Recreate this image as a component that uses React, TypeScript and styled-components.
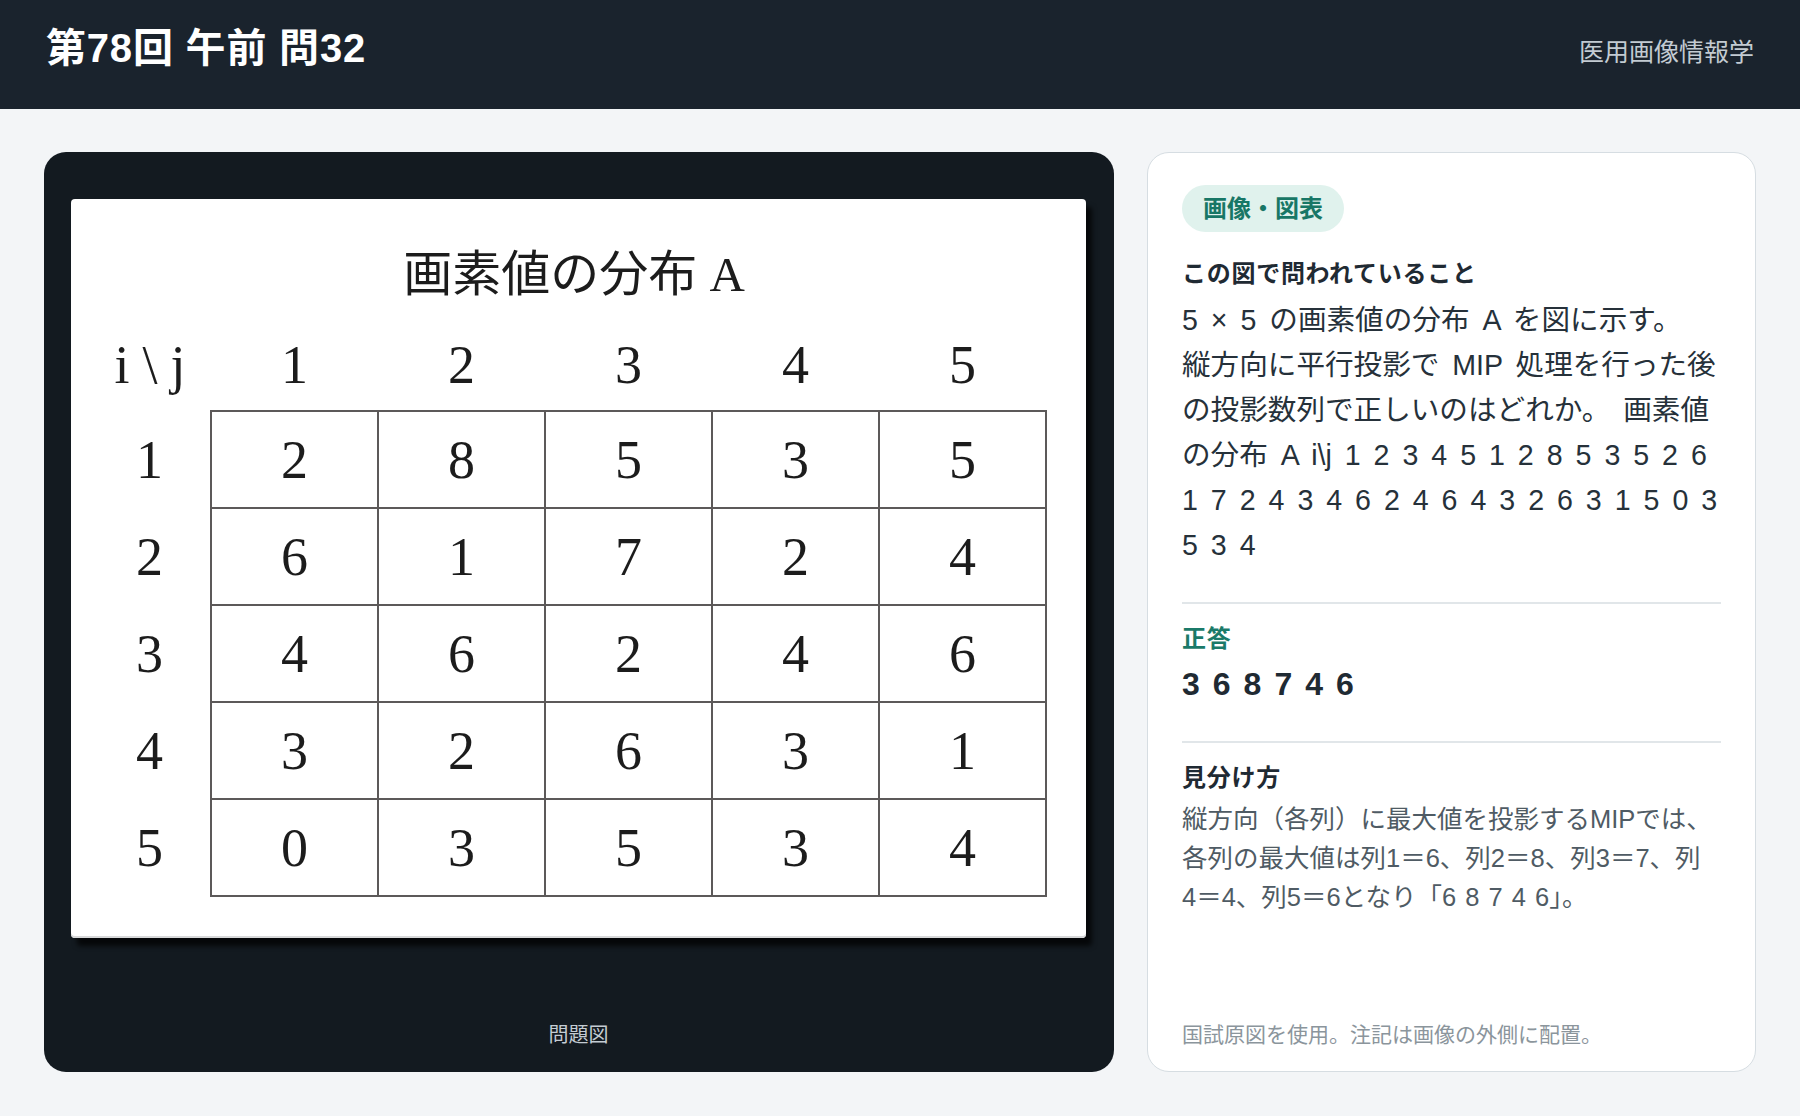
import React from "react";
import styled, { createGlobalStyle } from "styled-components";

const GlobalStyle = createGlobalStyle`
  * { box-sizing: border-box; }
  html, body { margin: 0; padding: 0; }
  body {
    background: #f3f5f7;
    font-family: "Liberation Sans", "Noto Sans CJK JP", sans-serif;
    color: #1f2a33;
  }
`;

const Page = styled.div`
  min-height: 100vh;
  display: flex;
  flex-direction: column;
`;

const Header = styled.header`
  flex: none;
  height: 109px;
  background: #1a232d;
  display: flex;
  align-items: center;
  justify-content: space-between;
  padding: 0 46px 5px;
`;

const Title = styled.h1`
  margin: 0 0 8px;
  font-size: 40px;
  line-height: 52px;
  font-weight: 700;
  letter-spacing: 0.02em;
  color: #ffffff;
`;

const Subject = styled.span`
  font-size: 25px;
  line-height: 36px;
  color: #c3cbd2;
`;

const Main = styled.main`
  flex: 1;
  display: grid;
  grid-template-columns: minmax(0, 1fr) 609px;
  gap: 33px;
  padding: 43px 44px 44px;
`;

const FigurePanel = styled.section`
  background: #131a20;
  border-radius: 22px;
  padding: 24px 28px 23px 27px;
  display: flex;
  flex-direction: column;
`;

const FigureStage = styled.div`
  flex: 1;
  display: flex;
  align-items: center;
  justify-content: center;
`;

const Sheet = styled.div`
  width: 1015px;
  height: 739px;
  flex: none;
  background: #ffffff;
  border-radius: 4px;
  box-shadow: inset 0 -2px 0 #d8d9da, 6px 8px 5px rgba(0, 0, 0, 0.72);
  padding: 46px 39px 40px 18px;
  display: flex;
  flex-direction: column;
  font-family: "Liberation Serif", "Noto Sans CJK JP", serif;
  color: #1c1c1c;
`;

const SheetTitle = styled.div`
  height: 60px;
  line-height: 60px;
  font-size: 49px;
  text-align: center;
  padding-left: 12px;
  margin-bottom: 14px;
`;

const Matrix = styled.table`
  border-collapse: collapse;
  table-layout: fixed;
  width: 957px;
`;

const LabelCol = styled.col`
  width: 122px;
`;

const DataCol = styled.col`
  width: 167px;
`;

const HeadRow = styled.tr`
  height: 92px;
`;

const BodyRow = styled.tr`
  height: 97px;
`;

const Label = styled.th<{ $wide?: boolean }>`
  padding: 0;
  font-weight: 400;
  font-size: 54px;
  line-height: 1;
  text-align: center;
  vertical-align: middle;
  letter-spacing: ${(p) => (p.$wide ? "0.24em" : "0")};
  text-indent: ${(p) => (p.$wide ? "0.24em" : "0")};
`;

const Value = styled.td`
  padding: 0;
  border: 2px solid #5c5959;
  font-size: 54px;
  line-height: 1;
  text-align: center;
  vertical-align: middle;
`;

const Caption = styled.div`
  margin-top: 60px;
  font-size: 20px;
  line-height: 28px;
  text-align: center;
  color: #c4ccd3;
`;

const InfoPanel = styled.aside`
  background: #ffffff;
  border: 1px solid #d6dde2;
  border-radius: 22px;
  padding: 32px 34px 20px;
  display: flex;
  flex-direction: column;
  align-items: flex-start;
`;

const Tag = styled.span`
  display: inline-block;
  padding: 6px 21px;
  line-height: 35px;
  font-size: 24px;
  font-weight: 700;
  color: #187766;
  background: #e0f2ed;
  border-radius: 999px;
`;

const Heading = styled.h2<{ $accent?: boolean }>`
  margin: 0;
  font-size: 24px;
  line-height: 36px;
  font-weight: 700;
  letter-spacing: 0.03em;
  color: ${(p) => (p.$accent ? "#1b7a69" : "#1f2a33")};
`;

const QuestionHeading = styled(Heading)`
  margin: 24px 0 6px;
`;

const SectionHeading = styled(Heading)`
  margin: 17px 0 4px;
`;

const Question = styled.p`
  margin: 0;
  font-size: 28.6px;
  line-height: 45px;
  word-spacing: 5px;
  white-space: nowrap;
  color: #26313a;
`;

const Divider = styled.hr`
  align-self: stretch;
  margin: 34px 0 0;
  border: none;
  height: 2px;
  background: #e1e6e9;
`;

const Answer = styled.div`
  font-size: 32px;
  line-height: 46px;
  font-weight: 700;
  letter-spacing: 13px;
  color: #1f2a33;
`;

const Explanation = styled.p`
  margin: 0;
  font-size: 25.5px;
  line-height: 39px;
  word-spacing: 2px;
  white-space: nowrap;
  color: #4f5b64;
`;

const Footnote = styled.p`
  margin: auto 0 0;
  font-size: 21px;
  line-height: 32px;
  color: #8b959c;
`;

const columns = [1, 2, 3, 4, 5];
const values = [
  [2, 8, 5, 3, 5],
  [6, 1, 7, 2, 4],
  [4, 6, 2, 4, 6],
  [3, 2, 6, 3, 1],
  [0, 3, 5, 3, 4],
];

export default function App() {
  return (
    <Page>
      <GlobalStyle />
      <Header>
        <Title>第78回 午前 問32</Title>
        <Subject>医用画像情報学</Subject>
      </Header>
      <Main>
        <FigurePanel>
          <FigureStage>
            <Sheet>
              <SheetTitle>画素値の分布 A</SheetTitle>
              <Matrix>
                <colgroup>
                  <LabelCol />
                  {columns.map((c) => (
                    <DataCol key={c} />
                  ))}
                </colgroup>
                <thead>
                  <HeadRow>
                    <Label $wide>i\j</Label>
                    {columns.map((c) => (
                      <Label key={c}>{c}</Label>
                    ))}
                  </HeadRow>
                </thead>
                <tbody>
                  {values.map((row, i) => (
                    <BodyRow key={i}>
                      <Label>{i + 1}</Label>
                      {row.map((v, j) => (
                        <Value key={j}>{v}</Value>
                      ))}
                    </BodyRow>
                  ))}
                </tbody>
              </Matrix>
            </Sheet>
          </FigureStage>
          <Caption>問題図</Caption>
        </FigurePanel>
        <InfoPanel>
          <Tag>画像・図表</Tag>
          <QuestionHeading>この図で問われていること</QuestionHeading>
          <Question>
            5 × 5 の画素値の分布 A を図に示す。
            <br />
            縦方向に平行投影で MIP 処理を行った後
            <br />
            の投影数列で正しいのはどれか。 画素値
            <br />
            の分布 A i\j 1 2 3 4 5 1 2 8 5 3 5 2 6
            <br />
            1 7 2 4 3 4 6 2 4 6 4 3 2 6 3 1 5 0 3
            <br />5 3 4
          </Question>
          <Divider />
          <SectionHeading $accent>正答</SectionHeading>
          <Answer>368746</Answer>
          <Divider />
          <SectionHeading>見分け方</SectionHeading>
          <Explanation>
            縦方向（各列）に最大値を投影するMIPでは、
            <br />
            各列の最大値は列1＝6、列2＝8、列3＝7、列
            <br />
            4＝4、列5＝6となり「6 8 7 4 6」。
          </Explanation>
          <Footnote>国試原図を使用。注記は画像の外側に配置。</Footnote>
        </InfoPanel>
      </Main>
    </Page>
  );
}
